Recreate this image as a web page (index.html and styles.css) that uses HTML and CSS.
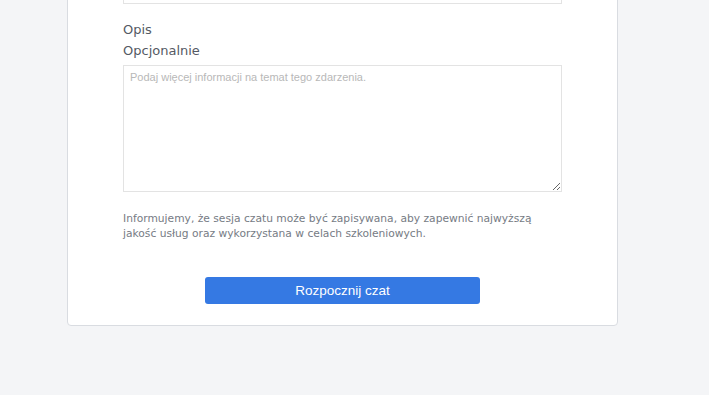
FILE: index.html
```html
<!DOCTYPE html>
<html lang="pl">
<head>
    <meta charset="UTF-8">
    <meta name="viewport" content="width=device-width, initial-scale=1.0">
    <title>Czat</title>
    <link rel="stylesheet" href="styles.css">
</head>
<body>
    <div class="card">
        <div class="field">
            <input class="text-input" type="text">
        </div>
        <div class="field">
            <label class="label" for="opis">Opis</label>
            <div class="label">Opcjonalnie</div>
            <textarea id="opis" class="textarea" placeholder="Podaj więcej informacji na temat tego zdarzenia."></textarea>
        </div>
        <p class="notice">Informujemy, że sesja czatu może być zapisywana, aby zapewnić najwyższą jakość usług oraz wykorzystana w celach szkoleniowych.</p>
        <div class="actions">
            <button class="start-button">Rozpocznij czat</button>
        </div>
    </div>
</body>
</html>
```

FILE: styles.css
```css
body {
    margin: 0;
    padding: 0;
    background-color: #f4f5f7;
    font-family: "DejaVu Sans", sans-serif;
    height: 395px;
    overflow: hidden;
}

.card {
    box-sizing: border-box;
    width: 551px;
    margin: -51px 0 0 67px;
    padding: 20px 55px 21px;
    background-color: #fff;
    border: 1px solid #d9dce1;
    border-radius: 4px;
}

.field {
    display: flex;
    flex-direction: column;
}

.text-input {
    box-sizing: border-box;
    height: 34px;
    width: 100%;
    border: 1px solid #e3e3e3;
    margin: 0 0 15px;
}

.label {
    font-size: 13px;
    line-height: 21px;
    color: #555a64;
}

.textarea {
    box-sizing: border-box;
    width: 100%;
    height: 127px;
    margin-top: 4px;
    padding: 5px 6px;
    border: 1px solid #e3e3e3;
    font-family: "Liberation Sans", Arial, sans-serif;
    font-size: 11px;
    resize: vertical;
}

.textarea::placeholder {
    color: #b8b8b8;
}

.notice {
    margin: 19px 0 0;
    font-size: 10.7px;
    line-height: 15px;
    color: #767b84;
}

.actions {
    display: flex;
    justify-content: center;
    margin-top: 36px;
}

.start-button {
    width: 275px;
    height: 27px;
    background-color: #3579e3;
    border: none;
    border-radius: 3px;
    color: #fff;
    font-family: "Liberation Sans", Arial, sans-serif;
    font-size: 13.5px;
    cursor: pointer;
}
```
